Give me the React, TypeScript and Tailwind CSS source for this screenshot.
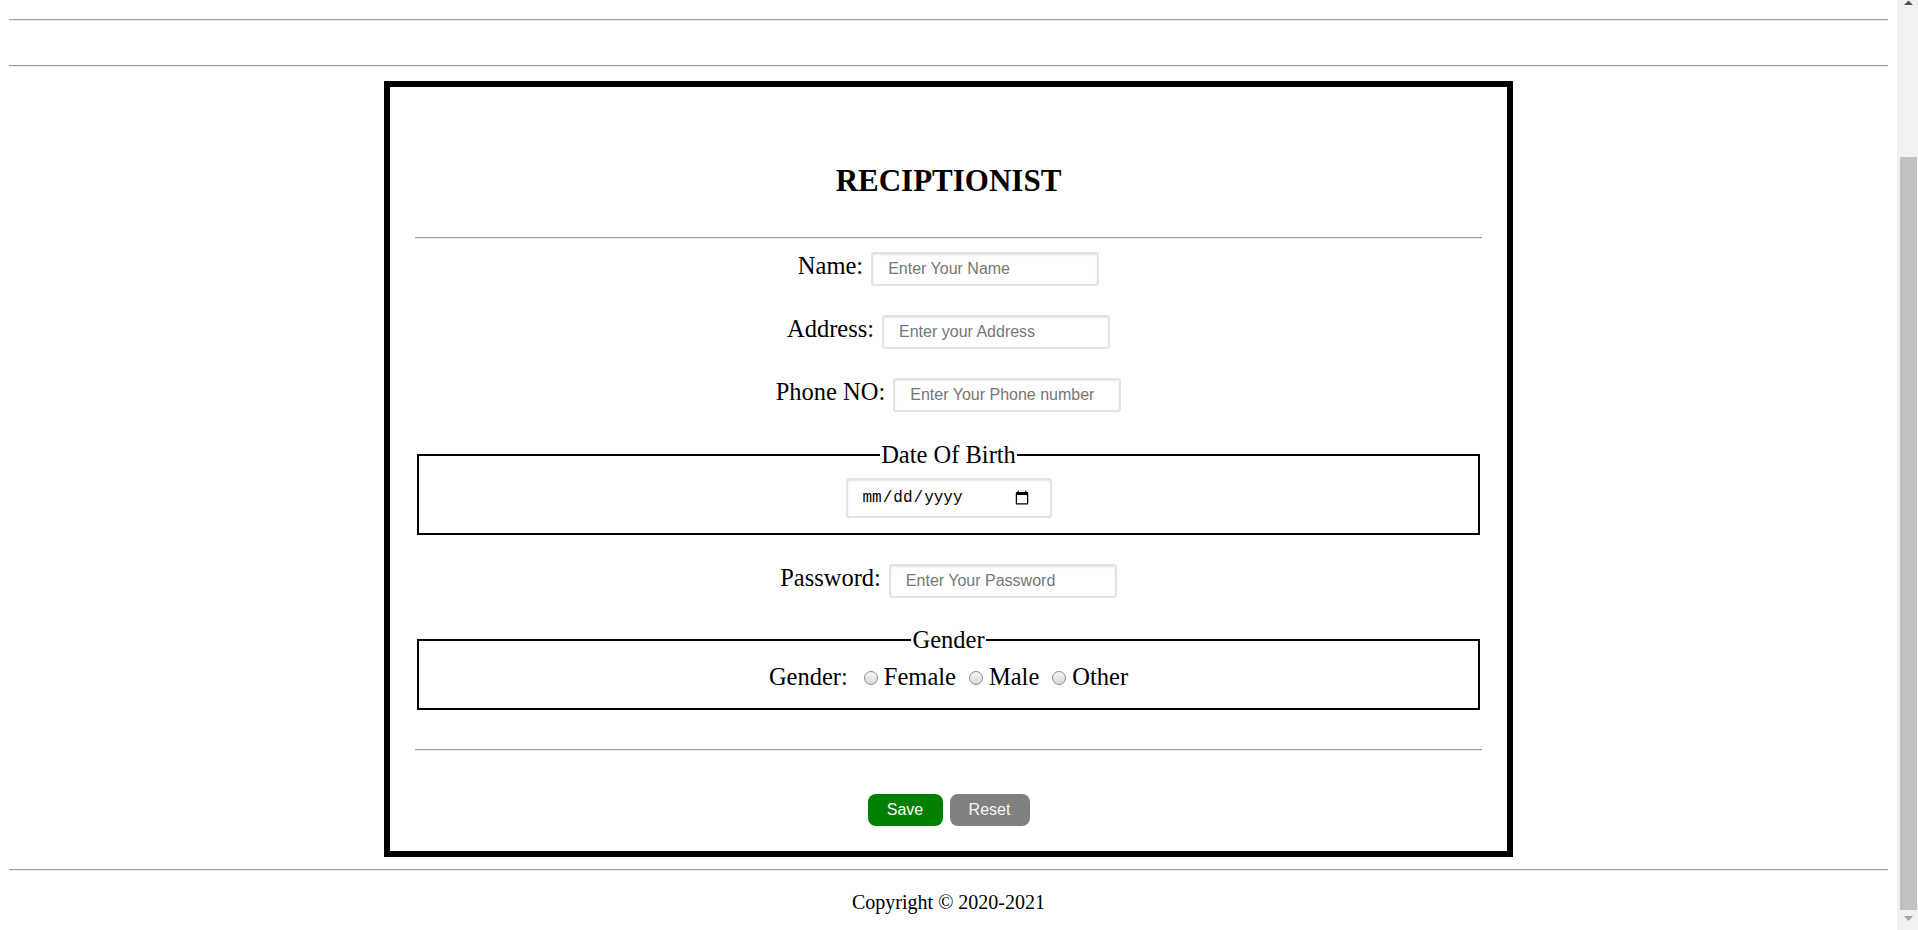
import { useState } from "react";

const inputCls =
  "h-[34px] w-[228px] rounded-[3px] border-2 border-[#e3e3e3] bg-white pl-[15px] pr-[8px] font-['Liberation_Sans'] text-[16px] text-black shadow-[inset_0_1px_2px_rgba(0,0,0,0.1)] outline-none placeholder:text-[#767676]";

interface FieldProps {
  label: string;
  placeholder: string;
  type?: string;
  className?: string;
}

function Field({ label, placeholder, type = "text", className }: FieldProps) {
  return (
    <div className={`flex items-baseline justify-center gap-[8px] ${className || ""}`}>
      <label className="text-[24.5px] leading-none">{label}</label>
      <input type={type} placeholder={placeholder} className={inputCls} />
    </div>
  );
}

function Radio({ name, label, className }: { name: string; label: string; className?: string }) {
  return (
    <label className={`flex items-baseline ${className || ""}`}>
      <input
        type="radio"
        name={name}
        className="m-0 mb-[1px] h-[14px] w-[14px] appearance-none rounded-full border border-[#8c8c8c] bg-linear-to-b from-[#f6f6f6] to-[#d9d9d9] checked:bg-[#4a4a4a]"
      />
      <span className="ml-[6px]">{label}</span>
    </label>
  );
}

function Scrollbar() {
  return (
    <aside className="flex h-full w-[21px] shrink-0 flex-col bg-[#f1f1f1]">
      <div className="h-[21px]">
        <svg width="21" height="21" viewBox="0 0 21 21">
          <polygon points="7,5 11.5,0.5 16,5" fill="#505050" />
        </svg>
      </div>
      <div className="flex-1">
        <div className="ml-[3px] mr-[1px] mt-[136px] h-[753px] bg-[#c1c1c1]" />
      </div>
      <div className="h-[20px]">
        <svg width="21" height="20" viewBox="0 0 21 20">
          <polygon points="7,6 16,6 11.5,11" fill="#a3a3a3" />
        </svg>
      </div>
    </aside>
  );
}

export default function App() {
  const [gender, setGender] = useState("");

  return (
    <div className="flex h-[930px] overflow-hidden bg-white font-['Liberation_Serif',serif] text-black">
      <main className="w-[1897px] shrink-0 px-[9px]">
        <hr className="mt-[19px] border-0 border-t border-b border-t-[#9d9d9d] border-b-[#ececec]" />
        <hr className="mt-[44px] border-0 border-t border-b border-t-[#9d9d9d] border-b-[#ececec]" />

        <form
          className="mx-auto mt-[14px] h-[776px] w-[1129px] border-[6px] border-black px-[25px]"
          onSubmit={(e) => e.preventDefault()}
        >
          <h2 className="mt-[78px] text-center text-[31px] font-bold leading-none">RECIPTIONIST</h2>
          <hr className="mt-[41px] border-0 border-t border-b border-t-[#9d9d9d] border-b-[#ececec]" />

          <Field className="mt-[13px]" label="Name:" placeholder="Enter Your Name" />
          <Field className="mt-[29px]" label="Address:" placeholder="Enter your Address" />
          <Field className="mt-[29px]" label="Phone NO:" placeholder="Enter Your Phone number" type="tel" />

          <fieldset className="mx-[2px] mt-[31px] border-2 border-black px-[12px] pb-[15px] pt-[10px]">
            <legend className="mx-auto px-[1px] text-[24.5px] leading-none">Date Of Birth</legend>
            <div className="flex justify-center">
              <input
                type="date"
                className="h-[40px] w-[206px] rounded-[3px] border-2 border-[#e3e3e3] bg-white pl-[14px] pr-[18px] font-['Liberation_Mono',monospace] text-[16px] text-black shadow-[inset_0_1px_2px_rgba(0,0,0,0.1)] outline-none"
              />
            </div>
          </fieldset>

          <Field className="mt-[29px]" label="Password:" placeholder="Enter Your Password" type="password" />

          <fieldset className="mx-[2px] mt-[30px] border-2 border-black px-[12px] pb-[18px] pt-[13px]">
            <legend className="mx-auto px-[1px] text-[24.5px] leading-none">Gender</legend>
            <div
              className="flex items-baseline justify-center text-[24.5px] leading-none"
              onChange={(e) => setGender((e.target as HTMLInputElement).value)}
              data-gender={gender}
            >
              <span>Gender:</span>
              <Radio className="ml-[16px]" name="gender" label="Female" />
              <Radio className="ml-[13px]" name="gender" label="Male" />
              <Radio className="ml-[13px]" name="gender" label="Other" />
            </div>
          </fieldset>

          <hr className="mt-[39px] border-0 border-t border-b border-t-[#9d9d9d] border-b-[#ececec]" />

          <div className="mt-[43px] flex justify-center gap-[7px] font-['Liberation_Sans',sans-serif] text-[16px]">
            <button type="submit" className="h-[32px] w-[75px] rounded-[8px] bg-[#008000] text-white">
              Save
            </button>
            <button type="reset" className="h-[32px] w-[80px] rounded-[8px] bg-[#808080] text-[#f4f4f4]">
              Reset
            </button>
          </div>
        </form>

        <hr className="mt-[12px] border-0 border-t border-b border-t-[#9d9d9d] border-b-[#ececec]" />
        <p className="mt-[21px] text-center text-[20px] leading-none">Copyright © 2020-2021</p>
      </main>
      <Scrollbar />
    </div>
  );
}
